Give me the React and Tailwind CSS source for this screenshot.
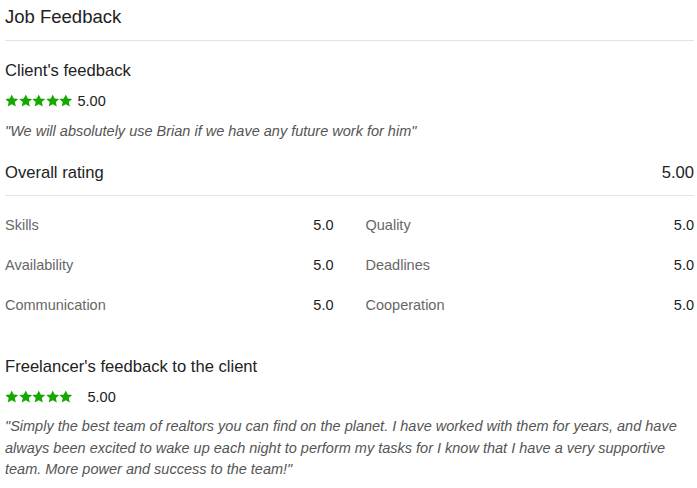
import React from "react";

const Stars = () => (
  <div className="flex items-center">
    {[0, 1, 2, 3, 4].map((i) => (
      <svg key={i} width="13.5" height="13.5" viewBox="0 0 24 24" fill="#14a800">
        <path d="M12 0.8l3.4 7.4 8.1.8-6.1 5.4 1.8 8L12 18.3l-7.2 4.1 1.8-8L.5 9l8.1-.8z" />
      </svg>
    ))}
  </div>
);

const ratings = [
  ["Skills", "5.0"],
  ["Quality", "5.0"],
  ["Availability", "5.0"],
  ["Deadlines", "5.0"],
  ["Communication", "5.0"],
  ["Cooperation", "5.0"],
];

export default function App() {
  return (
    <div
      className="bg-white text-[#222] pl-[5px] pr-[3px] w-[697px] h-[488px] overflow-hidden"
      style={{ fontFamily: '"Liberation Sans", Arial, sans-serif' }}
    >
      <div className="border-b border-[#e4e4e4] h-[41px] flex items-center">
        <h1 className="text-[18.5px] text-[#222] -mt-[7px]">Job Feedback</h1>
      </div>

      <h2 className="text-[16.6px] mt-[20px] leading-5">Client's feedback</h2>
      <div className="flex items-center gap-[5px] mt-[10px]">
        <Stars />
        <span className="text-[14.5px] leading-5">5.00</span>
      </div>
      <p className="italic text-[14.5px] text-[#555] mt-[10px] leading-5">
        "We will absolutely use Brian if we have any future work for him"
      </p>

      <div className="flex justify-between items-center border-b border-[#e4e4e4] pb-[12px] mt-[22px]">
        <span className="text-[16.6px] leading-5">Overall rating</span>
        <span className="text-[16.6px] leading-5">5.00</span>
      </div>

      <div className="grid grid-cols-2 gap-x-8 gap-y-[20px] mt-[19px]">
        {ratings.map(([label, value]) => (
          <div key={label} className="flex justify-between items-center">
            <span className="text-[14.5px] leading-5 text-[#676767]">{label}</span>
            <span className="text-[14.5px] leading-5 text-[#222]">{value}</span>
          </div>
        ))}
      </div>

      <h2 className="text-[16.6px] mt-[42px] leading-5">Freelancer's feedback to the client</h2>
      <div className="flex items-center gap-[15px] mt-[10px]">
        <Stars />
        <span className="text-[14.5px] leading-5">5.00</span>
      </div>
      <p className="italic text-[14.5px] mt-[9px] leading-[21.5px] text-[#555] pr-[2px]">
        "Simply the best team of realtors you can find on the planet. I have worked with them for years, and have
        always been excited to wake up each night to perform my tasks for I know that I have a very supportive
        team. More power and success to the team!"
      </p>
    </div>
  );
}
